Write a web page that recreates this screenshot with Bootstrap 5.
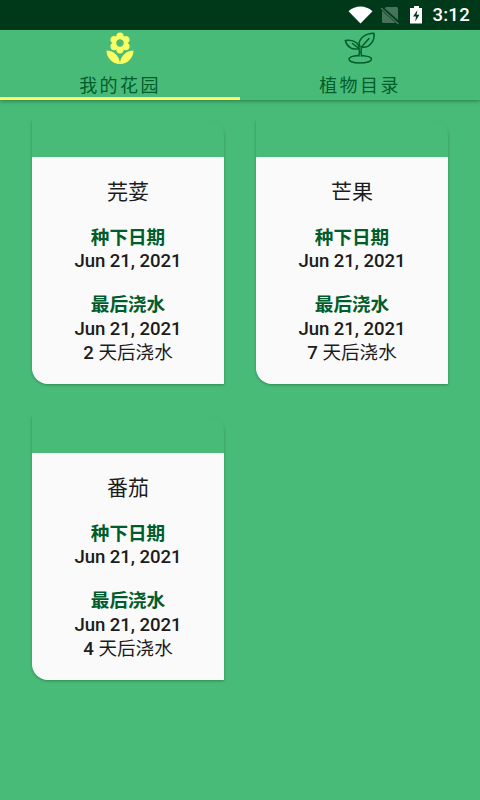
<!DOCTYPE html>
<html lang="zh-CN">

<head>
    <meta charset="UTF-8">
    <meta name="viewport" content="width=device-width, initial-scale=1.0">
    <title>我的花园</title>

    <!-- Bootstrap CDN -->
    <link href="https://cdn.jsdelivr.net/npm/bootstrap@5.3.0/dist/css/bootstrap.min.css" rel="stylesheet">
    <script src="https://cdn.jsdelivr.net/npm/bootstrap@5.3.0/dist/js/bootstrap.bundle.min.js"></script>

    <style>
        body {
            background: #49bb79;
            color: #1c1c1c;
            font-family: Roboto, "Noto Sans CJK SC", sans-serif;
            min-height: 100vh;
            overflow: hidden;
        }

        .status-bar {
            height: 30px;
            background: #00391a;
            color: #fff;
            padding-right: 10px;
            font-size: 18.5px;
            font-weight: 500;
            letter-spacing: .3px;
        }

        .status-bar span {
            padding-top: 2px;
        }

        .tabs {
            height: 70px;
            box-shadow: 0 1px 4px rgba(0, 60, 25, .5);
        }

        .tabs .nav-link {
            height: 70px;
            padding: 1px 0 0;
            border-radius: 0;
            border-bottom: 3px solid transparent;
            color: #005d2b;
            font-size: 18px;
            line-height: 24px;
            letter-spacing: 2.4px;
            text-indent: 2px;
        }

        .tabs .nav-link.active {
            border-color: #fcff62;
        }

        .tabs svg {
            display: block;
            margin: 0 auto 7px;
        }

        .garden {
            padding: 20px 32px;
        }

        #plants {
            --bs-gutter-x: 32px;
        }

        #plants > .col {
            margin-bottom: 32.5px;
        }

        .plant-card {
            height: 263.5px;
            border: 0;
            border-radius: 0 16px 0 16px;
            background: #49bb79;
            box-shadow: 0 1px 3px rgba(0, 60, 25, .38);
        }

        /* softens the top edge of the card */
        .plant-photo {
            height: 37px;
            box-shadow: 0 -4px 3px #49bb79;
            border-radius: 0 16px 0 0;
            clip-path: inset(-5px 0 0 0);
        }

        .plant-info {
            height: 226.5px;
            padding-top: 21px;
            background: #fafafa;
            border-radius: 0 0 0 16px;
            font-size: 18.6px;
            font-weight: 500;
            line-height: 24px;
        }

        .plant-info h2 {
            margin: 0 0 20px;
            font-size: 21px;
            font-weight: 400;
            line-height: 28px;
        }

        .plant-info h3 {
            margin: 0;
            color: #005d2b;
            font-size: 18.6px;
            font-weight: 700;
            line-height: 24px;
        }

        .plant-info p {
            margin: 0;
        }

        .plant-info .date {
            letter-spacing: -.05px;
        }

        .plant-info .planted {
            margin-top: -1px;
            padding-bottom: 19.5px;
        }

        .plant-info .days {
            font-weight: 400;
        }

        .plant-info .days b {
            font-weight: 500;
        }
    </style>
</head>

<body>
    <header class="status-bar d-flex align-items-center justify-content-end">
        <svg width="84" height="30" viewBox="0 0 84 30">
            <!-- wifi -->
            <path d="M.500 11.200C7.500 5 17.500 5 24.500 11.200L12.500 23.500z" fill="#fff" />
            <!-- no sim -->
            <path d="M38 7h10.500q1.500 0 1.500 1.500V20L36.500 8.300zM34 10.500L47.500 23H35.500q-1.500 0-1.500-1.500z" fill="#46745a" />
            <path d="M33 8L50.500 24" stroke="#46745a" stroke-width="1.500" />
            <!-- battery -->
            <path d="M66 6h5v2h3v15.500h-12V8h4z" fill="#fff" />
            <path d="M69.500 10L65 16.500h3L67.200 21.500L71.500 14.800h-3z" fill="#00391a" />
        </svg>
        <span>3:12</span>
    </header>

    <nav class="tabs nav nav-justified flex-nowrap">
        <a class="nav-link active" href="#">
            <svg width="36" height="36" viewBox="0 0 24 24" fill="#fcff62">
                <path d="M12 22c4.970 0 9-4.030 9-9-4.970 0-9 4.030-9 9zM5.600 10.250c0 1.380 1.120 2.500 2.500 2.500.53 0 1.010-.16 1.420-.44l-.02.19c0 1.380 1.120 2.500 2.500 2.500s2.500-1.120 2.500-2.500l-.02-.19c.4.28.89.44 1.420.44 1.380 0 2.500-1.120 2.500-2.500 0-1-.59-1.850-1.430-2.250.84-.4 1.430-1.250 1.430-2.250 0-1.380-1.120-2.500-2.500-2.500-.53 0-1.010.16-1.420.44l.02-.19C14.500 2.120 13.380 1 12 1S9.500 2.120 9.500 3.500l.02.19c-.4-.28-.89-.44-1.420-.44-1.380 0-2.500 1.120-2.500 2.500 0 1 .59 1.850 1.430 2.250-.84.4-1.430 1.250-1.430 2.250zM12 5.500c1.380 0 2.500 1.120 2.500 2.500s-1.120 2.500-2.500 2.500S9.500 9.380 9.500 8s1.120-2.500 2.500-2.500zM3 13c0 4.970 4.030 9 9 9 0-4.970-4.030-9-9-9z" />
            </svg>
            我的花园
        </a>
        <a class="nav-link" href="#">
            <svg width="36" height="36" viewBox="0 0 36 36" fill="none" stroke="#005d2b" stroke-width="1.500" stroke-linecap="round" stroke-linejoin="round">
                <path d="M18 15.500C15 9 22 2.500 32 2.300C33 9.500 27.500 17.500 19.500 16L27 7.500" />
                <path d="M17 17.500C10 19.500 5 16 3.300 9.500C11 8.500 17 11.500 17 17.500L10.500 12.500" />
                <path d="M17 17.500Q18 21 16.800 25M19.500 16Q18.500 21 19.500 25" />
                <path d="M16.800 24.500C11 25 7 26 7 28C7 30.500 12 32 18 32S29.500 30.500 29.500 28C29.500 26 25 25 19.500 24.500" />
            </svg>
            植物目录
        </a>
    </nav>

    <main class="garden">
        <div class="row row-cols-2" id="plants"></div>
    </main>

    <template id="plantTemplate">
        <div class="col">
            <div class="card plant-card">
                <div class="plant-photo"></div>
                <div class="plant-info text-center">
                    <h2></h2>
                    <h3>种下日期</h3>
                    <p class="date planted">Jun 21, 2021</p>
                    <h3>最后浇水</h3>
                    <p class="date">Jun 21, 2021</p>
                    <p class="days"><b></b> 天后浇水</p>
                </div>
            </div>
        </div>
    </template>

    <script>
        const plants = [
            { name: "芫荽", days: 2 },
            { name: "芒果", days: 7 },
            { name: "番茄", days: 4 }
        ];

        const template = document.getElementById("plantTemplate");
        plants.forEach(function (plant) {
            const item = template.content.cloneNode(true);
            item.querySelector("h2").textContent = plant.name;
            item.querySelector(".days b").textContent = plant.days;
            document.getElementById("plants").appendChild(item);
        });
    </script>
</body>

</html>
